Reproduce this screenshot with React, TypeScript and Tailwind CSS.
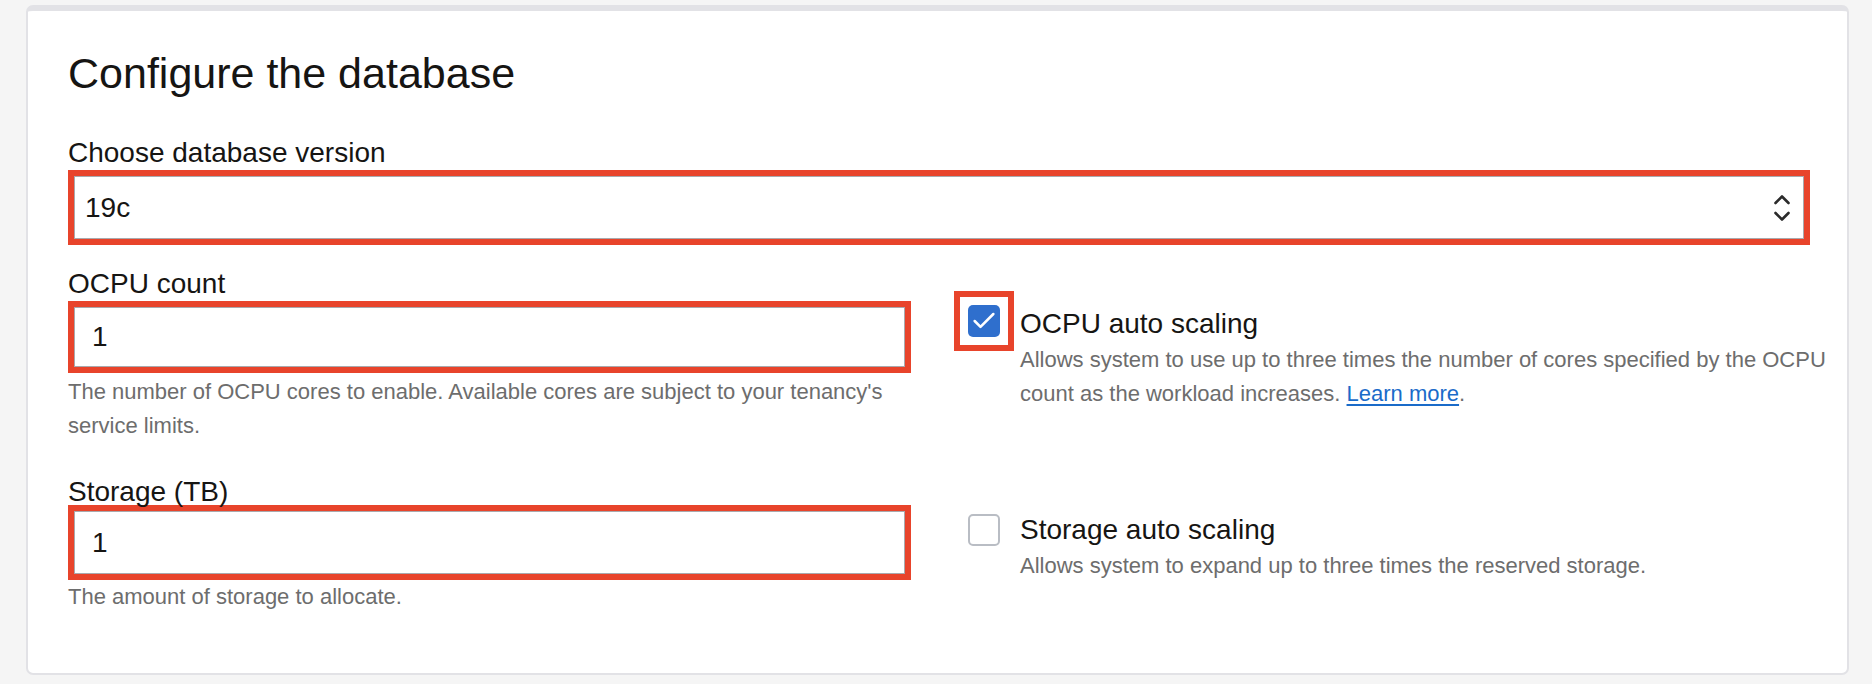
import { Check } from 'lucide-react';

const FONT = { fontFamily: '"Liberation Sans", Arial, sans-serif' };

function UpDown() {
  return (
    <svg width="18" height="30" viewBox="0 0 18 30" fill="none" stroke="#2b2b2b" strokeWidth="2.6" strokeLinecap="round" strokeLinejoin="round">
      <path d="M2.5 10 L9 3.5 L15.5 10" />
      <path d="M2.5 20 L9 26.5 L15.5 20" />
    </svg>
  );
}

function TextInput({ value, tall }: { value: string; tall?: boolean }) {
  return (
    <div className="border-[6px] border-[#e8442b]">
      <div className={(tall ? 'h-[63px]' : 'h-[60px]') + ' flex items-center border border-[#a9a9ad] bg-white pl-[17px] text-[28px] text-[#161513]'}>
        {value}
      </div>
    </div>
  );
}

function Toggle({ checked, title, children }: { checked?: boolean; title: string; children: React.ReactNode }) {
  return (
    <div className="flex gap-[20px] pl-[14px] pt-[40px]">
      <div className={(checked ? '-mt-[2px]' : 'mt-[1px]') + ' relative h-[32px] w-[32px] shrink-0'}>
        {checked ? (
          <>
            <div className="flex h-[32px] w-[32px] items-center justify-center rounded-[5px] bg-[#2f6fcd]">
              <Check className="h-[28px] w-[28px] text-white" strokeWidth={2.2} />
            </div>
            <div className="absolute -inset-[14px] border-[6px] border-[#e8442b]" />
          </>
        ) : (
          <div className="h-[32px] w-[32px] rounded-[5px] border-2 border-[#b9bdc4] bg-white" />
        )}
      </div>
      <div>
        <div className="text-[28px] leading-[34px] text-[#161513]">{title}</div>
        <div className="mt-[2px] text-[22px] leading-[34px] text-[#6d6d6d]">{children}</div>
      </div>
    </div>
  );
}

export default function App() {
  return (
    <div className="h-[684px] bg-[#f5f5f5] pl-[26px] pr-[23px] pt-[5px]" style={FONT}>
      <div className="h-[670px] rounded-[7px] border-x-2 border-b-2 border-t-[6px] border-[#e2e2e6] bg-white pl-[40px] pr-[8px] pt-[37px]">
        <h1 className="text-[43px] leading-[50px] text-[#161513]">Configure the database</h1>

        {/* Database version */}
        <div className="mt-[38px] mr-[29px]">
          <label className="block text-[28px] leading-[34px] text-[#161513]">Choose database version</label>
          <div className="border-[6px] border-[#e8442b]">
            <div className="flex h-[63px] items-center justify-between border border-[#a9a9ad] bg-white pl-[10px] pr-[12px] text-[28px] text-[#161513]">
              <span>19c</span>
              <UpDown />
            </div>
          </div>
        </div>

        {/* OCPU + storage */}
        <div className="mt-[22px] grid grid-cols-[843px_1fr] gap-x-[43px]">
          <div>
            <label className="block text-[28px] leading-[34px] text-[#161513]">OCPU count</label>
            <TextInput value="1" />
            <p className="mt-[2px] text-[22px] leading-[34px] text-[#6d6d6d]">
              The number of OCPU cores to enable. Available cores are subject to your tenancy's service limits.
            </p>
          </div>
          <Toggle checked title="OCPU auto scaling">
            Allows system to use up to three times the number of cores specified by the OCPU
            <br />
            count as the workload increases.{' '}
            <a href="#" className="text-[#1a6bc9] underline underline-offset-[3px]">Learn more</a>.
          </Toggle>

          <div className="mt-[32px]">
            <label className="block text-[28px] leading-[34px] text-[#161513]">Storage (TB)</label>
            <div className="-mt-[4px]">
              <TextInput value="1" tall />
            </div>
            <p className="text-[22px] leading-[34px] text-[#6d6d6d]">The amount of storage to allocate.</p>
          </div>
          <div className="mt-[30px]">
            <Toggle title="Storage auto scaling">Allows system to expand up to three times the reserved storage.</Toggle>
          </div>
        </div>
      </div>
    </div>
  );
}
